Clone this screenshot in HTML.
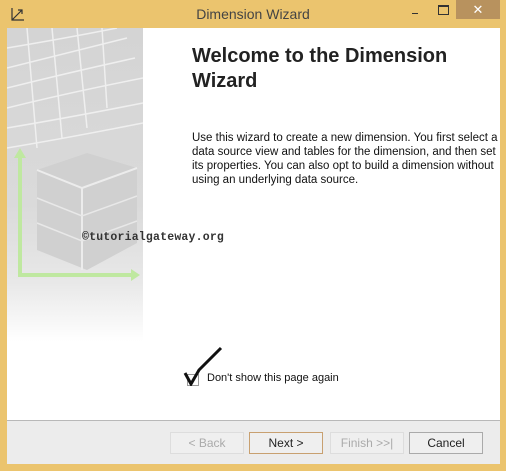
<!DOCTYPE html>
<html><head><style>
body{margin:0;width:506px;height:471px;background:#ebc46e;position:relative;overflow:hidden;font-family:"Liberation Sans",sans-serif}
.title{position:absolute;left:0;top:0;width:506px;height:28px;text-align:center;line-height:28px;font-size:14px;color:#444}
.client{position:absolute;left:7px;top:28px;width:493px;height:435px;background:#fff}
.left{position:absolute;left:0;top:0;width:136px;height:392px;background:linear-gradient(#d4d4d4 0%,#dadada 45%,#e8e8e8 65%,#fff 80%)}
.bottom{position:absolute;left:0;top:392px;width:493px;height:43px;background:#ececec;border-top:1px solid #b8b8b8}
.btn{position:absolute;top:11px;width:72px;height:20px;border:1px solid #c8c8c8;background:#efefef;font-size:12px;text-align:center;line-height:20px;color:#222}
.dis{color:#aaa;border-color:#ddd}
h1{position:absolute;margin:0;font-size:20px;font-weight:bold;color:#222;line-height:25px;width:290px}
.p{position:absolute;font-size:11.5px;line-height:14px;color:#111;width:320px;white-space:nowrap}
</style></head><body>
<div class="title">Dimension Wizard</div>
<svg style="position:absolute;left:10px;top:6px" width="16" height="16"><path d="M2 2V14H14M2 14L12 4M8 4H12V8" stroke="#333" fill="none" stroke-width="1.2"/></svg>
<div style="position:absolute;left:412px;top:13px;width:6px;height:1px;background:#333"></div>
<div style="position:absolute;left:438px;top:5px;width:9px;height:7px;border:1px solid #333;border-top-width:2px"></div>
<div style="position:absolute;left:456px;top:0;width:44px;height:19px;background:#b8925e;color:#fff;text-align:center;font-size:13px;line-height:19px">✕</div>
<div class="client">
<div class="left">
<svg width="136" height="300" style="position:absolute;left:0;top:0">
<g stroke="#efefef" stroke-width="1.5" fill="none">
<path d="M0 20Q60 10 110 0M0 40Q60 25 120 10M0 60Q60 45 128 30M0 80Q60 65 136 50M0 100Q60 90 136 75M0 120Q60 110 136 95M20 0L30 120M45 0L55 110M70 0L80 100M95 0L100 80"/>
</g>
<path d="M30 142L80 125L130 140L130 215L80 242L30 222Z" fill="#d0d0d0"/>
<path d="M30 142L75 160L130 140M75 160L75 242" stroke="#ececec" stroke-width="2" fill="none"/>
<path d="M30 170L75 188L130 168M30 195L75 213L130 193" stroke="#e8e8e8" stroke-width="1.5" fill="none"/>
<path d="M13 126V247H128" stroke="#bfe8a0" stroke-width="4" fill="none"/>
<path d="M7 130L13 120L19 130M124 241L133 247L124 253" fill="#bfe8a0"/>
</svg>
</div>
<div style="position:absolute;left:75px;top:203px;font-size:11.5px;font-weight:bold;color:#333;font-family:'Liberation Mono',monospace;letter-spacing:0.2px">©tutorialgateway.org</div>
<h1 style="left:185px;top:16px">Welcome to the Dimension Wizard</h1>
<div class="p" style="left:185px;top:103px">Use this wizard to create a new dimension. You first select a<br>data source view and tables for the dimension, and then set<br>its properties. You can also opt to build a dimension without<br>using an underlying data source.</div>
<div style="position:absolute;left:180px;top:346px;width:10px;height:10px;border:1px solid #999"></div>
<svg width="50" height="40" style="position:absolute;left:176px;top:318px"><path d="M2 27L8 38L16 24L38 2" stroke="#111" stroke-width="3" fill="none"/></svg>
<div style="position:absolute;left:200px;top:344px;font-size:11px;color:#111">Don't show this page again</div>
<div class="bottom">
<div class="btn dis" style="left:163px">&lt; Back</div>
<div class="btn" style="left:242px;border-color:#c8a070">Next &gt;</div>
<div class="btn dis" style="left:323px">Finish &gt;&gt;|</div>
<div class="btn" style="left:402px;border-color:#aaa">Cancel</div>
</div>
</div>
</body></html>
